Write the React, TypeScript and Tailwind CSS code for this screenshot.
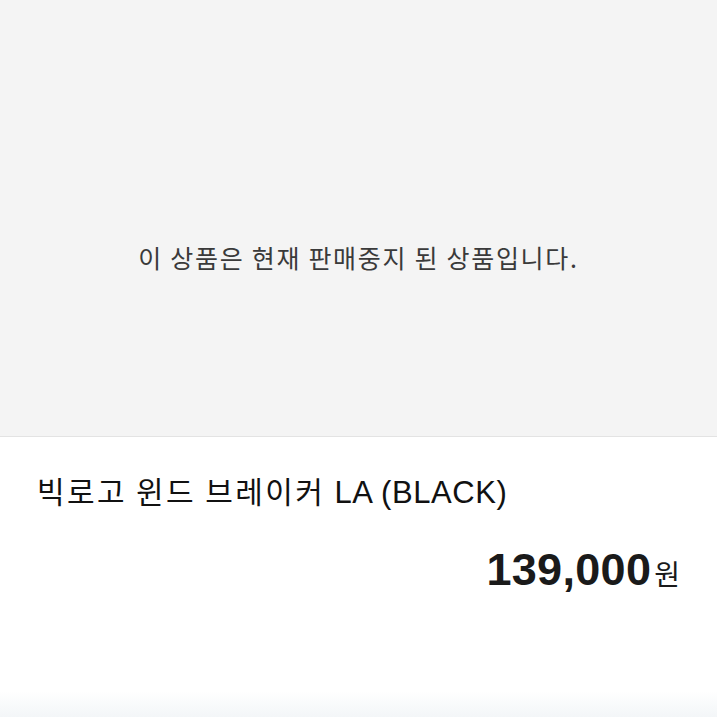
import React from 'react';

const font = { fontFamily: '"Noto Sans CJK KR", "Liberation Sans", sans-serif' };

export default function App() {
  return (
    <div className="w-[717px] h-[717px] bg-white flex flex-col overflow-hidden" style={font}>
      <div className="h-[437px] bg-[#f4f4f4] border-b border-[#e3e3e3] flex items-center justify-center">
        <p className="text-[25px] text-[#3a3a3a] tracking-[1.7px] mt-[80px]">이 상품은 현재 판매중지 된 상품입니다.</p>
      </div>
      <div className="flex-1 px-[37px] pt-[33px] flex flex-col">
        <h1 className="text-[30px] leading-[40px] text-[#111] tracking-[2.4px]">
          빅로고 윈드 브레이커 <span style={{ fontFamily: '"Liberation Sans", sans-serif' }} className="text-[31px] tracking-[0.6px]">LA (BLACK)</span>
        </h1>
        <div className="flex justify-end items-baseline mt-[23px]">
          <span className="text-[45px] font-bold text-[#1a1a1a] tracking-[0.3px]" style={{ fontFamily: '"Liberation Sans", sans-serif' }}>139,000</span>
          <span className="text-[28px] text-[#1a1a1a] ml-[3px]">원</span>
        </div>
        <div className="flex-1" />
      </div>
      <div className="h-[26px] bg-gradient-to-b from-white to-[#f3f6f8]" />
    </div>
  );
}
